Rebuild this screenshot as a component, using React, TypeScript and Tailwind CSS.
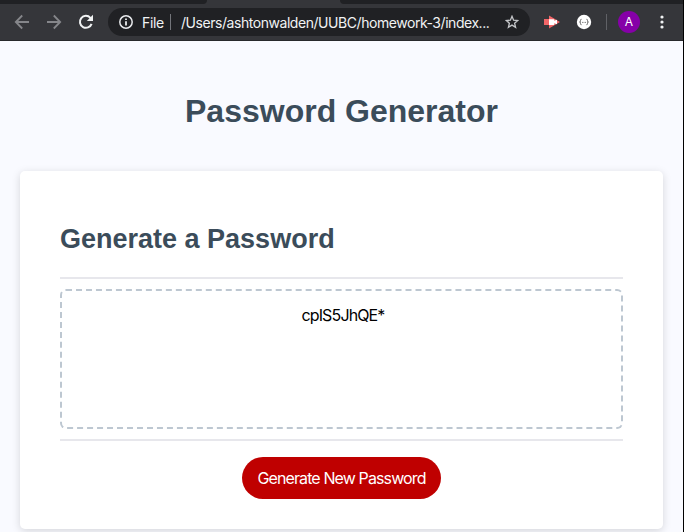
import React from "react";

function Toolbar() {
  return (
    <header className="h-[41px] w-full shrink-0 border-b border-[#28292c] bg-[#35363a] font-['Inter','Liberation_Sans',sans-serif]">
      <div className="flex h-1 w-full justify-between">
        <div className="h-full w-[207px] rounded-br-[4px] bg-[#202124]" />
        <div className="h-full w-[343px] rounded-bl-[4px] bg-[#202124]" />
      </div>
      <div className="flex h-9 items-center">
        <svg className="ml-[14px] shrink-0" width="16" height="16" viewBox="0 0 16 16" fill="none" stroke="#85868a" strokeWidth="1.8">
          <path d="M15 8H2M8.2 1.5 1.8 8l6.4 6.5" />
        </svg>
        <svg className="ml-4 shrink-0" width="16" height="16" viewBox="0 0 16 16" fill="none" stroke="#85868a" strokeWidth="1.8">
          <path d="M1 8h13M7.8 1.5 14.2 8l-6.4 6.5" />
        </svg>
        <svg className="ml-4 shrink-0" width="16" height="16" viewBox="0 0 16 16" fill="none" stroke="#f1f3f4" strokeWidth="2">
          <path d="M13.6 9.8A6 6 0 1 1 12.4 3.8L14 5.4" />
          <path d="M15 0.8V7H8.8z" fill="#f1f3f4" stroke="none" />
        </svg>
        <div className="ml-[14px] flex h-7 w-[422px] shrink-0 items-center rounded-full bg-[#202124] text-[14px] text-[#f1f3f4]">
          <svg className="ml-[11px] shrink-0" width="14" height="14" viewBox="0 0 14 14" fill="none" stroke="#e8eaed" strokeWidth="1.5">
            <circle cx="7" cy="7" r="6.2" />
            <path d="M7 6.2v4.2M7 3.4v1.5" strokeWidth="1.8" />
          </svg>
          <span className="ml-[9px] w-[22px] whitespace-nowrap tracking-[-0.35px]">File</span>
          <span className="ml-[6px] h-4 w-px bg-[#73757a]" />
          <span className="ml-[10px] w-[309px] whitespace-nowrap tracking-[-0.45px]">/Users/ashtonwalden/UUBC/homework-3/index...</span>
          <svg className="ml-[15px] shrink-0" width="14" height="14" viewBox="0 0 14 14" fill="none" stroke="#c4c6c9" strokeWidth="1.3">
            <path d="m7 1.3 1.6 3.9 4.2.3-3.2 2.7 1 4.1L7 10.1l-3.6 2.2 1-4.1-3.2-2.7 4.2-.3z" />
          </svg>
        </div>
        <svg className="ml-[14px] shrink-0" width="16" height="14" viewBox="0 0 16 14">
          <path d="M0 4h5V.5L16 7 5 13.5V10H0z" fill="#f26668" />
          <path d="M5 4.2h5.2v1.6L13 4.8v4.4l-2.8-1V10H5z" fill="#fff" />
        </svg>
        <svg className="ml-4 shrink-0" width="16" height="16" viewBox="0 0 16 16">
          <circle cx="8" cy="8" r="7.2" fill="#fff" />
          <path d="M5.5 5.3c-1.2 0-1 .7-1 1.5s-.2 1.100-.9 1.200c.7.1.9.4.9 1.200s-.2 1.500 1 1.500M10.5 5.3c1.200 0 1 .7 1 1.500s.2 1.100.9 1.200c-.7.1-.9.4-.9 1.200s.2 1.500-1 1.500M6 8.400h.8M7.600 8.400h.8M9.200 8.400h.8" fill="none" stroke="#555" strokeWidth="0.9" />
        </svg>
        <span className="ml-[14px] h-4 w-px bg-[#606166]" />
        <span className="ml-[11px] flex size-[22px] items-center justify-center rounded-full bg-[#8600a8] text-[12px] text-white">A</span>
        <svg className="ml-[20px] shrink-0" width="4" height="14" viewBox="0 0 4 14" fill="#f1f3f4">
          <circle cx="2" cy="2" r="1.6" />
          <circle cx="2" cy="7" r="1.6" />
          <circle cx="2" cy="12" r="1.6" />
        </svg>
      </div>
    </header>
  );
}

export default function App() {
  return (
    <div className="flex h-[532px] w-[684px] flex-col overflow-hidden border-r border-black bg-[#f9faff] font-['Liberation_Sans',sans-serif]">
      <Toolbar />
      <main className="px-5">
        <h1 className="flex h-[130px] items-center justify-center whitespace-nowrap pt-[10px] text-[32px] font-bold text-[#3b4c5a]">
          Password Generator
        </h1>
        <section className="h-[358px] w-[643px] rounded-[5px] bg-white px-10 shadow-[0_2px_8px_rgba(0,0,0,0.15)]">
          <h2 className="flex h-[106px] items-center whitespace-nowrap pt-[31px] text-[27px] font-bold text-[#3b4c5a]">
            Generate a Password
          </h2>
          <hr className="h-0.5 border-0 bg-[#e7e7ec]" />
          <div className="mt-[10px] h-[140px] rounded-[6px] border-2 border-dashed border-[#bdc7d1] pt-[12px] pl-[3px] text-center font-['Inter','Liberation_Sans',sans-serif] text-[16px] leading-6 tracking-[-0.87px] text-black">
            cpIS5JhQE*
          </div>
          <hr className="mt-[10px] h-0.5 border-0 bg-[#e7e7ec]" />
          <button className="mx-auto mt-4 flex h-[42px] w-[199px] items-center justify-center whitespace-nowrap rounded-full bg-[#bf0000] font-['Inter','Liberation_Sans',sans-serif] text-[16px] tracking-[-0.88px] text-white">
            Generate New Password
          </button>
        </section>
      </main>
    </div>
  );
}
